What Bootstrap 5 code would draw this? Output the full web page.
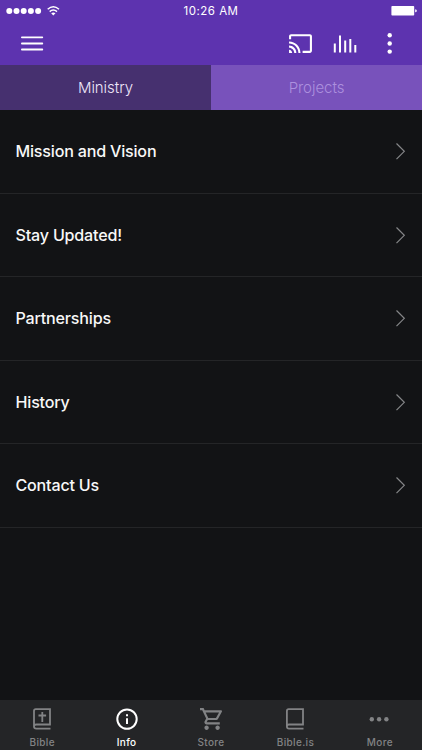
<!DOCTYPE html>
<html lang="en">
<head>
<meta charset="utf-8">
<meta name="viewport" content="width=device-width, initial-scale=1">
<title>Info</title>
<link href="https://cdn.jsdelivr.net/npm/bootstrap@5.3.0/dist/css/bootstrap.min.css" rel="stylesheet">
<style>
body{font-family:Inter,"Liberation Sans",sans-serif;background:#121315;height:750px}
svg{display:block;flex:none}
.app-head{background:#5d33af;height:65px}
.status{height:22px;padding:0 5px 0 5px}
.status .signal{margin-left:1px}
.status .battery{margin-right:-1px}
.clock{font-size:11.5px;line-height:22px;letter-spacing:.5px}
.tools{height:43px;padding:0 25px 0 20px}
.switcher{height:45px}
.switcher .nav-link{font-size:15px;font-weight:300;line-height:46px;height:45px;border-radius:0;color:#ac90de;background:#7852bb;letter-spacing:-.05px}
.switcher .nav-link.active{color:#eee6fa;background:#46306f}
.menu-item{height:83.5px;padding:0 16px 0 15.5px;background:#121315;color:#f8f8f8;font-size:16.1px;font-weight:500;letter-spacing:-.2px}
.list-group-flush > .menu-item,.list-group-flush > .menu-item:last-child{border:0;border-bottom:1px solid #242527}
.tabbar{height:50px;background:#242527}
.tabbar .nav-link{color:#828385;font-size:10px;font-weight:500;line-height:12px;letter-spacing:.35px}
.tabbar .nav-link.active{color:#fff}
.tabbar span{margin-top:6px}
</style>
<script src="https://cdn.jsdelivr.net/npm/bootstrap@5.3.0/dist/js/bootstrap.bundle.min.js"></script>
</head>
<body class="d-flex flex-column overflow-hidden">
<header class="app-head text-white">
  <div class="status row g-0 align-items-center">
    <div class="col">
      <svg class="signal" width="56" height="14" fill="#fff"><circle cx="3.3" cy="7" r="3"/><circle cx="10.5" cy="7" r="3"/><circle cx="17.7" cy="7" r="3"/><circle cx="24.9" cy="7" r="3"/><circle cx="32.1" cy="7" r="3"/><path d="M41.7 5.2Q47.3.3 53 5.2M43.7 7.6Q47.3 4.5 51 7.6" fill="none" stroke="#fff" stroke-width="1.5"/><path d="M45.2 9.2Q47.3 7.6 49.5 9.2L47.3 11.5Z"/></svg>
    </div>
    <div class="col-auto clock">10:26 AM</div>
    <div class="col d-flex justify-content-end">
      <svg class="battery" width="27" height="12"><rect x="0.4" y="1" width="22.8" height="9.6" rx=".8" fill="#fff"/><path d="M24.2 4.3q1.6 0 1.6 1.5t-1.6 1.5z" fill="#fff"/></svg>
    </div>
  </div>
  <div class="tools d-flex align-items-center">
    <svg width="24" height="24" stroke="#fff" stroke-width="1.8" stroke-linecap="round"><path d="M1.9 5.3H22.3M1.9 11.5H22.3M1.9 17.5H22.3"/></svg>
    <svg class="ms-auto" width="25" height="25" viewBox="0 0 24 24" fill="#fff"><path d="M21 3H3c-1.1 0-2 .9-2 2v3h2V5h18v14h-7v2h7c1.1 0 2-.9 2-2V5c0-1.1-.9-2-2-2zM1 18v3h3c0-1.66-1.34-3-3-3zm0-4v2c2.76 0 5 2.24 5 5h2c0-3.87-3.13-7-7-7zm0-4v2c4.97 0 9 4.03 9 9h2c0-6.08-4.93-11-11-11z"/></svg>
    <svg class="ms-3" width="32" height="24" stroke="#fff" stroke-width="2"><path d="M5.8 11.5V20.5M11 3.5V20.5M16.2 8.5V20.5M21.3 7V20.5M26.3 13V20.5"/></svg>
    <svg class="ms-4" width="12" height="24" fill="#fff"><circle cx="4.7" cy="3.2" r="2.2"/><circle cx="4.7" cy="11.5" r="2.2"/><circle cx="4.7" cy="19.6" r="2.2"/></svg>
  </div>
</header>
<nav class="switcher nav nav-fill row g-0">
  <a class="nav-link active col-6 p-0" href="#">Ministry</a>
  <a class="nav-link col-6 p-0" href="#">Projects</a>
</nav>
<main class="list-group list-group-flush flex-grow-1">
  <a class="list-group-item menu-item d-flex align-items-center justify-content-between" href="#">Mission and Vision<svg width="11" height="18" fill="none" stroke="#858688" stroke-width="1.2"><path d="M1.5 1.5L9.3 9.3L1.5 17.1"/></svg></a>
  <a class="list-group-item menu-item d-flex align-items-center justify-content-between" href="#">Stay Updated!<svg width="11" height="18" fill="none" stroke="#858688" stroke-width="1.2"><path d="M1.5 1.5L9.3 9.3L1.5 17.1"/></svg></a>
  <a class="list-group-item menu-item d-flex align-items-center justify-content-between" href="#">Partnerships<svg width="11" height="18" fill="none" stroke="#858688" stroke-width="1.2"><path d="M1.5 1.5L9.3 9.3L1.5 17.1"/></svg></a>
  <a class="list-group-item menu-item d-flex align-items-center justify-content-between" href="#">History<svg width="11" height="18" fill="none" stroke="#858688" stroke-width="1.2"><path d="M1.5 1.5L9.3 9.3L1.5 17.1"/></svg></a>
  <a class="list-group-item menu-item d-flex align-items-center justify-content-between" href="#">Contact Us<svg width="11" height="18" fill="none" stroke="#858688" stroke-width="1.2"><path d="M1.5 1.5L9.3 9.3L1.5 17.1"/></svg></a>
</main>
<footer class="tabbar nav row g-0">
  <a class="nav-link col d-flex flex-column align-items-center p-0 pt-2" href="#"><svg width="22" height="22" fill="none" stroke="currentColor" stroke-width="1.8"><path d="M19.5 20.7H5.3Q3 20.7 3 18.6V3Q3 1.2 4.8 1.2H19V16.5H5.3Q3 16.5 3 18.6M11.3 4V14M7.5 7.5H15.1"/></svg><span>Bible</span></a>
  <a class="nav-link active col d-flex flex-column align-items-center p-0 pt-2" href="#"><svg width="22" height="22" fill="none" stroke="currentColor" stroke-width="2"><circle cx="11" cy="11.1" r="9.7"/><path d="M11 10.2V16M11 6.2V8.2"/></svg><span>Info</span></a>
  <a class="nav-link col d-flex flex-column align-items-center p-0 pt-2" href="#"><svg width="22" height="22" viewBox="1 2 20 20" fill="currentColor"><path d="M15.55 13c.75 0 1.41-.41 1.75-1.03l3.58-6.49c.37-.66-.11-1.48-.87-1.48H5.21l-.94-2H1v2h2l3.6 7.59-1.35 2.44C4.52 15.37 5.48 17 7 17h12v-2H7l1.1-2h7.45zM6.16 6h12.15l-2.76 5H8.53L6.16 6zM7 18c-1.1 0-1.99.9-1.99 2S5.9 22 7 22s2-.9 2-2-.9-2-2-2zm10 0c-1.1 0-1.99.9-1.99 2s.89 2 1.99 2 2-.9 2-2-.9-2-2-2z"/></svg><span>Store</span></a>
  <a class="nav-link col d-flex flex-column align-items-center p-0 pt-2" href="#"><svg width="22" height="22" fill="none" stroke="currentColor" stroke-width="1.8"><path d="M19.5 20.7H5Q2.9 20.7 2.9 18.6V3Q2.9 1.2 4.7 1.2H19V16.5H5Q2.9 16.5 2.9 18.6"/></svg><span>Bible.is</span></a>
  <a class="nav-link col d-flex flex-column align-items-center p-0 pt-2" href="#"><svg width="22" height="22" fill="currentColor"><circle cx="2.8" cy="11.3" r="2.2"/><circle cx="10.1" cy="11.3" r="2.2"/><circle cx="17.4" cy="11.3" r="2.2"/></svg><span>More</span></a>
</footer>
</body>
</html>
